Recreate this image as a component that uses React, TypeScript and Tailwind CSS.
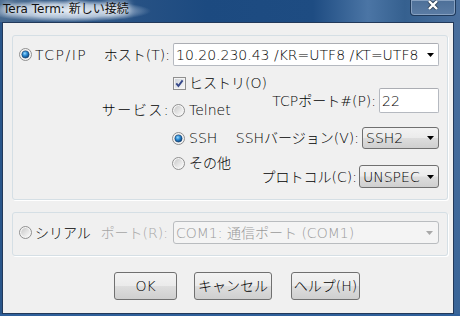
import type { ReactNode } from "react";

const btnFace =
  "bg-[linear-gradient(180deg,#f3f3f3_0%,#ebebeb_48%,#dddddd_52%,#cfcfcf_100%)] border border-[#707070] rounded-[3px]";

function Defs() {
  return (
    <svg width="0" height="0" className="block">
      <defs>
        <linearGradient id="rb-in" x1="0" y1="0" x2="1" y2="1">
          <stop offset="0" stopColor="#c9c9c9" />
          <stop offset="1" stopColor="#fbfbfb" />
        </linearGradient>
        <radialGradient id="rb-dot" cx="0.4" cy="0.35" r="0.7">
          <stop offset="0" stopColor="#9bdcff" />
          <stop offset="0.45" stopColor="#2a8ad4" />
          <stop offset="1" stopColor="#0b3a6e" />
        </radialGradient>
        <linearGradient id="cb-in" x1="0" y1="0" x2="1" y2="1">
          <stop offset="0" stopColor="#cfd4da" />
          <stop offset="1" stopColor="#f7f7f7" />
        </linearGradient>
      </defs>
    </svg>
  );
}

function Radio({ on }: { on?: boolean }) {
  return (
    <svg width="13" height="13" viewBox="0 0 13 13" className="shrink-0">
      <circle cx="6.5" cy="6.5" r="6" fill="#f4f4f4" stroke="#8f8f8f" />
      <circle cx="6.5" cy="6.5" r="4.4" fill="url(#rb-in)" />
      {on && <circle cx="6.5" cy="6.5" r="3.6" fill="url(#rb-dot)" stroke="#123f70" strokeWidth="0.6" />}
    </svg>
  );
}

function Check() {
  return (
    <svg width="13" height="13" viewBox="0 0 13 13" className="shrink-0">
      <rect x="0.5" y="0.5" width="12" height="12" fill="#f4f4f4" stroke="#8f8f8f" />
      <rect x="2" y="2" width="9" height="9" fill="url(#cb-in)" />
      <path d="M3.3 6.4 L5.4 9 L9.6 3.4" fill="none" stroke="#36488a" strokeWidth="1.9" />
    </svg>
  );
}

function Arrow({ color = "#000" }: { color?: string }) {
  return (
    <svg width="7" height="4" viewBox="0 0 7 4" className="shrink-0">
      <path d="M0 0 H7 L3.5 4 Z" fill={color} />
    </svg>
  );
}

function Option({ children, className }: { children: ReactNode; className: string }) {
  return <div className={`flex h-[20px] items-center gap-[4px] ${className}`}>{children}</div>;
}

function Select({ value, w, h }: { value: string; w: string; h: string }) {
  return (
    <div className={`${btnFace} ${w} ${h} flex items-center justify-between pl-[3px] pr-[4px]`}>
      <span>{value}</span>
      <Arrow />
    </div>
  );
}

export default function App() {
  return (
    <div className="w-[460px] h-[316px] flex flex-col overflow-hidden bg-[#2c5a8f] text-[14px] font-light leading-none text-black font-['DejaVu_Sans','Noto_Sans_CJK_JP',sans-serif]">
      <div className="h-[22px] flex items-start bg-[linear-gradient(90deg,#47698f_0%,#2c5586_22%,#1c4a80_45%,#1e4c82_68%,#4b75a5_80%,#35608f_88%,#4a6f9d_100%)]">
        <span className="-ml-[16px] pl-[19px] pr-[22px] h-[22px] pt-[3px] text-[12px] font-normal text-[#111] bg-[radial-gradient(closest-side,rgba(232,239,247,0.95)_0%,rgba(200,215,232,0.8)_60%,rgba(120,150,185,0)_100%)] [text-shadow:0_0_6px_#fff,0_0_8px_#fff]">
          Tera Term: 新しい接続
        </span>
        <div className="ml-auto mr-[4px] w-[46px] h-[16px] rounded-b-[4px] border border-t-0 border-[#1f3a5c] bg-[linear-gradient(180deg,#4d6f98,#5b7ca4)] shadow-[inset_0_0_0_1px_#86a0c0] flex justify-center">
          <svg width="12" height="10" viewBox="0 0 12 10">
            <path d="M2 1 L10 9 M10 1 L2 9" stroke="#33465c" strokeWidth="4" />
            <path d="M2 1 L10 9 M10 1 L2 9" stroke="#fff" strokeWidth="2.4" />
          </svg>
        </div>
      </div>

      <div className="flex h-[292px]">
        <div className="w-[2px] bg-[#2a568a]" />
        <div className="w-[452px] border border-[#22395a] bg-[#f0f0f0] flex flex-col">
          <Defs />

          {/* TCP/IP group */}
          <div className="ml-[9px] mt-[12px] w-[436px] h-[165px] border border-[#d5dfe5] rounded-[3px] shadow-[1px_1px_0_#fff] flex pl-[6px] pt-[7px]">
            <div className="w-[81px] h-[23px] flex items-center gap-[3px]">
              <Radio on />
              <span className="tracking-[1.5px]">TCP/IP</span>
            </div>
            <div className="flex flex-col">
              <div className="h-[23px] flex items-center">
                <span className="w-[73px] pr-[3px] text-right">ホスト(T):</span>
                <div className="w-[266px] h-[23px] bg-white border border-[#b5b9c0] border-t-[#abadb3] rounded-[2px] flex items-center justify-between pl-[2px] pr-[4px]">
                  <span>10.20.230.43 /KR=UTF8 /KT=UTF8</span>
                  <Arrow />
                </div>
              </div>
              <div className="flex">
                <div className="w-[73px] pr-[3px] text-right mt-[34px] h-[20px] leading-[20px] tracking-[1.5px]">サービス:</div>
                <div className="w-[58px] flex flex-col">
                  <div className="mt-[7px] h-[20px] flex items-center gap-[3px]">
                    <Check />
                    <span className="whitespace-nowrap">ヒストリ(O)</span>
                  </div>
                  <Option className="mt-[7px] -ml-[1px]">
                    <Radio />
                    <span>Telnet</span>
                  </Option>
                  <Option className="mt-[8px] -ml-[1px]">
                    <Radio on />
                    <span>SSH</span>
                  </Option>
                  <Option className="mt-[5px] -ml-[1px]">
                    <Radio />
                    <span>その他</span>
                  </Option>
                </div>
                <div className="w-[208px] flex flex-col items-end">
                  <div className="mt-[22px] h-[25px] flex items-center gap-[3px]">
                    <span>TCPポート#(P):</span>
                    <div className="w-[60px] h-[25px] bg-white border border-[#b5b9c0] border-t-[#abadb3] rounded-[2px] flex items-center pl-[2px]">
                      22
                    </div>
                  </div>
                  <div className="mt-[14px] h-[22px] flex items-center gap-[3px]">
                    <span>SSHバージョン(V):</span>
                    <Select value="SSH2" w="w-[77px]" h="h-[22px]" />
                  </div>
                  <div className="mt-[16px] h-[23px] flex items-center gap-[2px]">
                    <span>プロトコル(C):</span>
                    <Select value="UNSPEC" w="w-[80px]" h="h-[23px]" />
                  </div>
                </div>
              </div>
            </div>
          </div>

          {/* Serial group */}
          <div className="ml-[9px] mt-[12px] w-[436px] h-[44px] border border-[#d5dfe5] rounded-[3px] shadow-[1px_1px_0_#fff] flex items-start pl-[6px] pt-[8px]">
            <div className="w-[81px] h-[23px] flex items-center gap-[3px]">
              <Radio />
              <span>シリアル</span>
            </div>
            <div className="h-[23px] flex items-center">
              <span className="w-[73px] pr-[5px] text-right text-[#a6a6a6]">ポート(R):</span>
              <div className="w-[266px] h-[23px] bg-[#f4f4f4] border border-[#b9bcbf] rounded-[3px] flex items-center justify-between pl-[2px] pr-[5px] text-[#9a9a9a]">
                <span>COM1: 通信ポート (COM1)</span>
                <Arrow color="#a8a8a8" />
              </div>
            </div>
          </div>

          {/* Buttons */}
          <div className="mt-[16px] flex pl-[111px]">
            <div className={`${btnFace} w-[63px] h-[28px] flex items-center justify-center`}>OK</div>
            <div className={`${btnFace} ml-[17px] w-[78px] h-[28px] flex items-center justify-center`}>キャンセル</div>
            <div className={`${btnFace} ml-[19px] w-[69px] h-[28px] flex items-center justify-center whitespace-nowrap`}>ヘルプ(H)</div>
          </div>
        </div>
        <div className="flex-1 bg-[linear-gradient(180deg,#4a6f9d,#3a6598)]" />
      </div>
      <div className="h-[2px] bg-[#2f609b]" />
    </div>
  );
}
